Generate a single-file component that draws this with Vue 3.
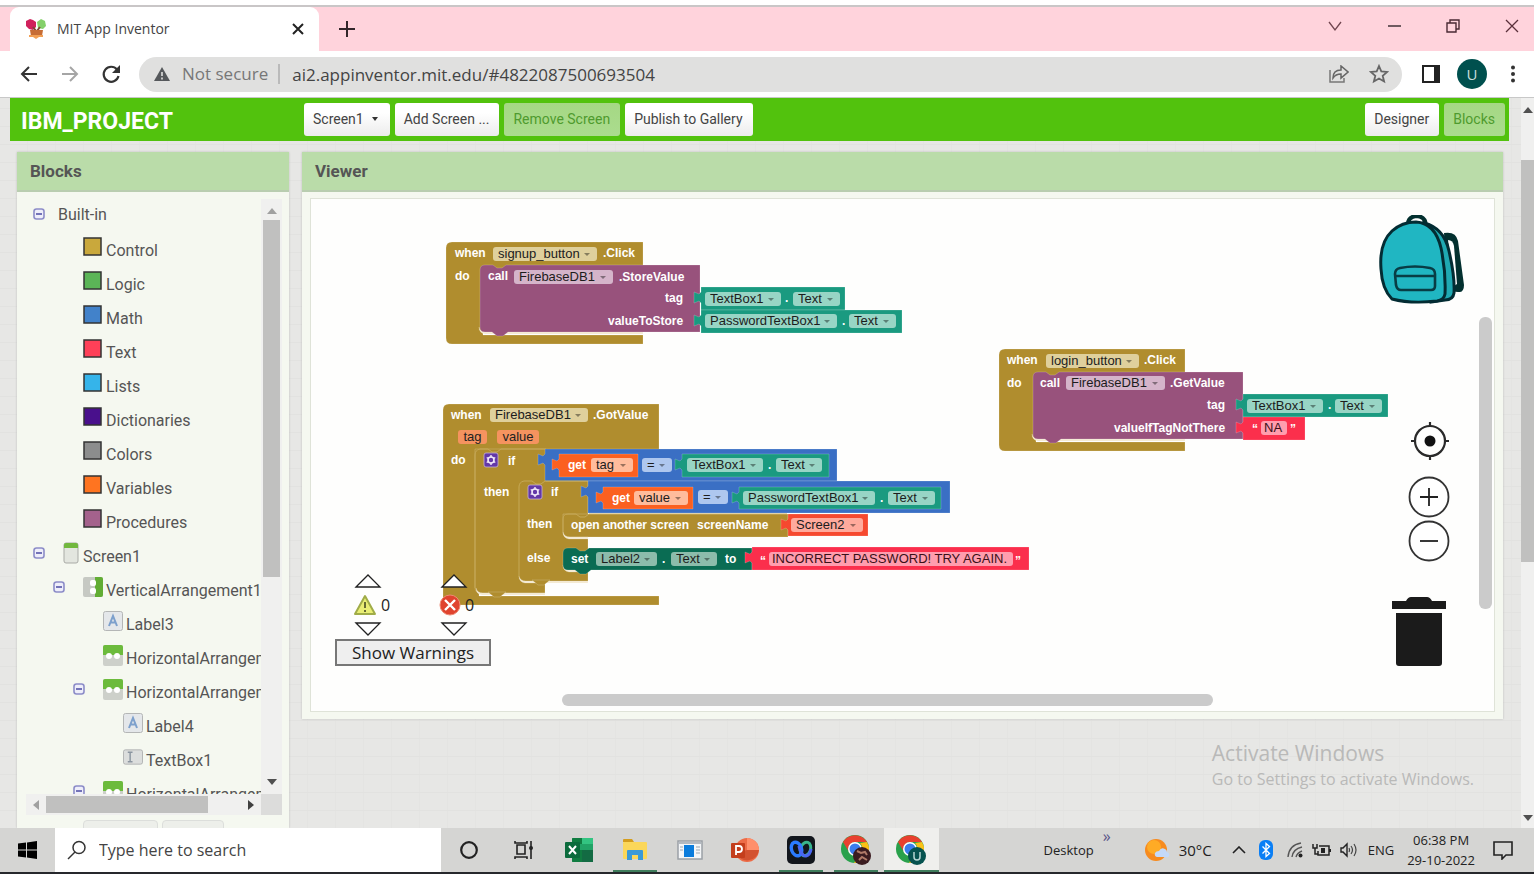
<script setup>
import { ref } from 'vue'

const address = ref('ai2.appinventor.mit.edu/#4822087500693504')
const query = ref('')

const screenButtons = [
  { text: 'Screen1', caret: true },
  { text: 'Add Screen ...' },
  { text: 'Remove Screen', off: true },
  { text: 'Publish to Gallery' },
]

const tree = [
  { level: 0, toggle: true, text: 'Built-in', root: true },
  { level: 1, color: '#c9a83c', text: 'Control' },
  { level: 1, color: '#5bb557', text: 'Logic' },
  { level: 1, color: '#4282ca', text: 'Math' },
  { level: 1, color: '#ff4058', text: 'Text' },
  { level: 1, color: '#35b4ea', text: 'Lists' },
  { level: 1, color: '#49108c', text: 'Dictionaries' },
  { level: 1, color: '#8c8d8d', text: 'Colors' },
  { level: 1, color: '#ff7420', text: 'Variables' },
  { level: 1, color: '#a4628c', text: 'Procedures' },
  { level: 0, toggle: true, icon: 'screen', text: 'Screen1' },
  { level: 1, toggle: true, icon: 'vertical', text: 'VerticalArrangement1' },
  { level: 2, icon: 'label', text: 'Label3' },
  { level: 2, icon: 'horizontal', text: 'HorizontalArrangement1' },
  { level: 2, toggle: true, icon: 'horizontal', text: 'HorizontalArrangement2' },
  { level: 3, icon: 'label', text: 'Label4' },
  { level: 3, icon: 'textbox', text: 'TextBox1' },
  { level: 2, toggle: true, icon: 'horizontal', text: 'HorizontalArrangement3' },
]

// Block outlines use workspace coordinates; the view is scrolled by this offset.
const view = { x: 311, y: 199 }

const GOLD = '#b08d2e'
const PURPLE = '#98527c'
const TEAL = '#1a9a80'
const BLUE = '#3a6fc4'
const ORANGE = '#fb6020'
const RED = '#fb2f4c'
const GREEN = '#0a6c53'

function valueBlock(x, y, w, h, fill) {
  return { fill, d: `M${x} ${y}h${w}v${h}h${-w}V${y + 16}l-2 -2l-5 2v-11l5 2l2 -2z` }
}
function stackBlock(x, y, w, h, fill) {
  return {
    fill,
    d: `M${x + 5} ${y}h8l4 3h5l4 -3H${x + w}v${h}H${x + 28}l-5 4h-6l-5 -4H${x + 5}q-5 0 -5 -5V${y + 5}q0 -5 5 -5z`,
  }
}
function eventBlock(x, y, right, innerX, innerTop, armTop, bottom) {
  return {
    fill: GOLD,
    d: `M${x + 6} ${y}H${right}V${innerTop + 4}H${innerX + 4}V${armTop}H${right}V${bottom}H${x + 6}q-6 0 -6 -6V${y + 6}q0 -6 6 -6z`,
  }
}
function seam(x, y, right) {
  return { fill: '#f3e8cf', d: `M${x} ${y - 6}q1 5 7 5H${right}v2H${x + 6}q-6 -1 -6 -7z` }
}

const shapes = [
  eventBlock(446, 242, 643, 479, 265, 335, 344),
  seam(479, 333, 643),
  stackBlock(480, 265, 220, 67, PURPLE),
  valueBlock(701, 287, 144, 23, TEAL),
  valueBlock(701, 310, 201, 23, TEAL),

  eventBlock(999, 349, 1185, 1032, 372, 442, 451),
  seam(1032, 440, 1185),
  stackBlock(1033, 372, 210, 67, PURPLE),
  valueBlock(1243, 394, 145, 23, TEAL),
  valueBlock(1243, 417, 62, 23, RED),

  eventBlock(443, 404, 659, 475, 449, 596, 605),
  { fill: GOLD, d: 'M475 449H546V481H588V583H545V593H480q-5 0 -5 -6z' },
  seam(476, 594, 545),
  { fill: GOLD, d: 'M488 592h18l-6 5h-6z' },
  seam(519, 582, 588),
  { fill: GOLD, d: 'M532 580h18l-6 5h-6z' },
  valueBlock(545, 449, 292, 32, BLUE),
  valueBlock(559, 454, 79, 23, ORANGE),
  valueBlock(682, 454, 147, 23, TEAL),
  valueBlock(588, 481, 362, 32, BLUE),
  valueBlock(603, 487, 90, 22, ORANGE),
  valueBlock(739, 487, 202, 22, TEAL),
  { fill: GOLD, d: 'M563 514H788V537H568q-5 0 -5 -5z' },
  seam(563, 538, 588),
  valueBlock(788, 514, 80, 22, '#f6492f'),
  seam(563, 571, 588),
  stackBlock(563, 548, 189, 22, GREEN),
  valueBlock(752, 547, 277, 23, RED),
]

const edges = [
  'M475 588V455q0 -5 5 -6h8l4 3h5l4 -3H545',
  'M519 577V487q0 -5 5 -6h8l4 3h5l4 -3H588',
  'M563 532V519q0 -5 5 -5h8l4 3h5l4 -3H787',
]

const labels = [
  [455, 253, 'when'], [603, 253, '.Click'], [455, 276, 'do'], [488, 276, 'call'],
  [619, 277, '.StoreValue'], [665, 298, 'tag'], [608, 321, 'valueToStore'],
  [785, 298, '.'], [842, 321, '.'],
  [1007, 360, 'when'], [1144, 360, '.Click'], [1007, 383, 'do'], [1040, 383, 'call'],
  [1170, 383, '.GetValue'], [1207, 405, 'tag'], [1114, 428, 'valueIfTagNotThere'],
  [1328, 405, '.'], [1252, 429, '“'], [1290, 429, '”'],
  [451, 415, 'when'], [593, 415, '.GotValue'], [451, 460, 'do'], [508, 461, 'if'],
  [568, 465, 'get'], [768, 465, '.'], [484, 492, 'then'], [551, 492, 'if'],
  [612, 498, 'get'], [880, 498, '.'], [527, 524, 'then'],
  [571, 525, 'open another screen'], [697, 525, 'screenName'],
  [527, 558, 'else'], [571, 559, 'set'], [662, 559, '.'], [725, 559, 'to'],
  [760, 561, '“'], [1015, 561, '”'],
].map(([x, y, text]) => ({ x, y, text }))

const fields = [
  [493, 254, 104, 'gold', 'signup_button'],
  [514, 277, 99, 'purple', 'FirebaseDB1'],
  [705, 299, 76, 'teal', 'TextBox1'],
  [793, 299, 47, 'teal', 'Text'],
  [705, 321, 132, 'teal', 'PasswordTextBox1'],
  [849, 321, 47, 'teal', 'Text'],
  [1046, 361, 93, 'gold', 'login_button'],
  [1066, 383, 99, 'purple', 'FirebaseDB1'],
  [1247, 406, 76, 'teal', 'TextBox1'],
  [1335, 406, 47, 'teal', 'Text'],
  [490, 415, 98, 'gold', 'FirebaseDB1'],
  [591, 465, 42, 'orange', 'tag'],
  [642, 465, 30, 'blue', '='],
  [687, 465, 76, 'teal', 'TextBox1'],
  [776, 465, 46, 'teal', 'Text'],
  [634, 498, 54, 'orange', 'value'],
  [698, 497, 30, 'blue', '='],
  [743, 498, 132, 'teal', 'PasswordTextBox1'],
  [888, 498, 47, 'teal', 'Text'],
  [791, 525, 72, 'coral', 'Screen2'],
  [596, 559, 61, 'green', 'Label2'],
  [671, 559, 46, 'green', 'Text'],
].map(([x, y, w, tone, text]) => ({ x, y, w, tone, text }))

const inputs = [
  { x: 1261, y: 428, w: 26, text: 'NA', name: 'Value if tag not there' },
  { x: 769, y: 559, w: 244, text: 'INCORRECT PASSWORD! TRY AGAIN.', name: 'Label text' },
]
const chips = [
  { x: 458, y: 437, w: 29, text: 'tag' },
  { x: 497, y: 437, w: 42, text: 'value' },
]

function place(item) {
  return {
    left: item.x - view.x + 'px',
    top: item.y - 7 - view.y + 'px',
    width: item.w ? item.w + 'px' : 'auto',
  }
}

const apps = ['Cortana', 'Task View', 'Excel', 'File Explorer', 'Mail', 'PowerPoint', 'Webex', 'Chrome', 'Chrome profile U']
const running = ['File Explorer', 'Webex', 'Chrome', 'Chrome profile U']
</script>

<template>
  <div class="desktop">
    <header class="tabstrip">
      <div class="tab">
        <svg width="22" height="22" viewBox="0 0 22 22" aria-hidden="true">
          <path d="M1 3l4-2 3 1 3 2v5l-3 3-4-1-3-3z" fill="#d0215c" />
          <path d="M12 4l4-3 4 2 1 5-3 3-5-1z" fill="#84d06a" />
          <path d="M8 9l3 4M15 9l-3 4" stroke="#7c4a35" stroke-width="2" />
          <path d="M5 12h13l-1 6H6z" fill="#c76d35" />
          <path d="M4 17h14v2h-4l-3 2-3-2H4z" fill="#f2a054" />
        </svg>
        <span class="tab-title">MIT App Inventor</span>
        <button class="plain" aria-label="Close tab">
          <svg width="12" height="12" viewBox="0 0 12 12"><path d="M1 1l10 10M11 1L1 11" stroke="#222" stroke-width="2" /></svg>
        </button>
      </div>
      <button class="plain newtab" aria-label="New tab">
        <svg width="16" height="16" viewBox="0 0 16 16"><path d="M8 0v16M0 8h16" stroke="#33262a" stroke-width="2" /></svg>
      </button>
      <div class="window-controls">
        <button class="plain" aria-label="Search tabs">
          <svg width="14" height="14" viewBox="0 0 14 14"><path d="M1 3l6 8 6-8" fill="none" stroke="#70454f" stroke-width="1.3" /></svg>
        </button>
        <button class="plain" aria-label="Minimize">
          <svg width="14" height="14" viewBox="0 0 14 14"><path d="M1 7h13" stroke="#33262a" stroke-width="1.4" /></svg>
        </button>
        <button class="plain" aria-label="Restore">
          <svg width="14" height="14" viewBox="0 0 14 14"><path d="M1 4h9v9H1zM4 4V1h9v9h-3" fill="none" stroke="#4a2a33" stroke-width="1.4" /></svg>
        </button>
        <button class="plain" aria-label="Close window">
          <svg width="14" height="14" viewBox="0 0 14 14"><path d="M1 1l12 12M13 1L1 13" stroke="#5a303a" stroke-width="1.3" /></svg>
        </button>
      </div>
    </header>

    <nav class="toolbar">
      <button class="plain nav" aria-label="Back">
        <svg width="18" height="18" viewBox="0 0 18 18"><path d="M17 9H2M9 2L2 9l7 7" fill="none" stroke="#333" stroke-width="2" /></svg>
      </button>
      <button class="plain nav" aria-label="Forward">
        <svg width="18" height="18" viewBox="0 0 18 18"><path d="M1 9h15M9 2l7 7-7 7" fill="none" stroke="#a5a5a5" stroke-width="2" /></svg>
      </button>
      <button class="plain nav" aria-label="Reload">
        <svg width="20" height="20" viewBox="0 0 20 20"><path d="M16 5.500A7.500 7.500 0 1 0 17.500 12" fill="none" stroke="#333" stroke-width="2.200" /><path d="M19 1v8h-8z" fill="#333" /></svg>
      </button>
      <div class="omnibox">
        <svg width="16" height="14" viewBox="0 0 16 14" aria-hidden="true"><path d="M8 0l8 14H0z" fill="#55585b" /><path d="M8 5v4M8 10.500v2" stroke="#e0e0df" stroke-width="1.600" /></svg>
        <span class="secure">Not secure</span>
        <input v-model="address" aria-label="Address" />
        <button class="plain" aria-label="Share">
          <svg width="20" height="18" viewBox="0 0 20 18"><path d="M1 5v12h14v-4" fill="none" stroke="#777" stroke-width="1.500" /><path d="M4 13c0-5 3-8 8-8V1l7 6-7 6V9c-4 0-6 1-8 4z" fill="none" stroke="#666" stroke-width="1.500" /></svg>
        </button>
        <button class="plain" aria-label="Bookmark">
          <svg width="20" height="20" viewBox="0 0 20 20"><path d="M10 2l2.300 5.400 5.900.5-4.500 3.900 1.400 5.700L10 14.500l-5.100 3 1.400-5.700L1.800 7.900l5.900-.5z" fill="none" stroke="#666" stroke-width="1.800" /></svg>
        </button>
      </div>
      <button class="plain" aria-label="Side panel">
        <svg width="18" height="18" viewBox="0 0 18 18"><path d="M1 1h16v16H1z" fill="none" stroke="#222" stroke-width="2" /><path d="M12 1h6v16h-6z" fill="#222" /></svg>
      </button>
      <button class="avatar">U</button>
      <button class="plain" aria-label="Menu">
        <svg width="6" height="18" viewBox="0 0 6 18"><circle cx="3" cy="2.500" r="2" fill="#333" /><circle cx="3" cy="9" r="2" fill="#333" /><circle cx="3" cy="15.500" r="2" fill="#333" /></svg>
      </button>
    </nav>

    <div class="page">
      <div class="content">
        <header class="topbar">
          <h1>IBM_PROJECT</h1>
          <button v-for="b in screenButtons" :key="b.text" class="push" :class="{ off: b.off }" :disabled="b.off">
            {{ b.text }}<i v-if="b.caret" class="caret"></i>
          </button>
          <span class="spacer"></span>
          <button class="push">Designer</button>
          <button class="push off" disabled>Blocks</button>
        </header>

        <main class="panels">
          <section class="panel side">
            <h2>Blocks</h2>
            <div class="tree-box">
              <ul class="tree">
                <li v-for="(row, i) in tree" :key="i" :class="['row', { root: row.root }]" :style="{ paddingLeft: 7 + row.level * 20 + 'px' }">
                  <button v-if="row.toggle" class="plain toggle" :aria-label="'Collapse ' + row.text">
                    <svg width="12" height="12" viewBox="0 0 12 12"><rect x="1" y="1" width="10" height="10" rx="2.500" fill="#eeeefa" stroke="#8c8cc8" stroke-width="1.600" /><path d="M3 6h6" stroke="#5454a8" stroke-width="1.600" /></svg>
                  </button>
                  <span v-else class="toggle"></span>
                  <svg v-if="row.color" class="icon" width="20" height="20" viewBox="0 0 20 20"><rect x="1" y="1" width="17" height="17" :fill="row.color" stroke="#333" stroke-width="1.500" /></svg>
                  <svg v-else-if="row.icon === 'screen'" class="icon" width="17" height="22" viewBox="0 0 17 22"><rect x="1" y="1" width="14" height="20" rx="2" fill="#e3e6df" stroke="#a9aba6" /><path d="M1 6V3q0-2 2-2h10q2 0 2 2v3z" fill="#72b83e" /></svg>
                  <svg v-else-if="row.icon === 'vertical'" class="icon" width="20" height="20" viewBox="0 0 20 20"><rect width="20" height="20" rx="2" fill="#c6c9c3" /><path d="M12 0h6q2 0 2 2v16q0 2-2 2h-6z" fill="#62ad34" /><rect x="7" y="3" width="6" height="6" rx="2" fill="#fff" /><rect x="7" y="11" width="6" height="6" rx="2" fill="#fff" /></svg>
                  <svg v-else-if="row.icon === 'horizontal'" class="icon" width="20" height="21" viewBox="0 0 20 21"><rect width="20" height="21" rx="2" fill="#cdd0ca" /><path d="M0 10V2q0-2 2-2h16q2 0 2 2v8z" fill="#6cbb3c" /><circle cx="6" cy="11" r="3" fill="#fff" /><circle cx="14" cy="11" r="3" fill="#fff" /></svg>
                  <svg v-else-if="row.icon === 'label'" class="icon" width="20" height="20" viewBox="0 0 20 20"><rect x=".5" y=".5" width="19" height="19" rx="2" fill="#e4e7ea" stroke="#b4b6b6" /><path d="M6 15l4-10 4 10M7.500 11.500h5" fill="none" stroke="#7da0cc" stroke-width="2" /></svg>
                  <svg v-else-if="row.icon === 'textbox'" class="icon" width="20" height="16" viewBox="0 0 21 16"><rect x=".5" y=".5" width="20" height="15" rx="2" fill="#dcdedd" stroke="#b0b2b2" /><path d="M5 3h5M5 13h5M7.500 3v10" stroke="#8b95a0" stroke-width="1.500" /></svg>
                  <span class="name">{{ row.text }}</span>
                </li>
              </ul>
              <div class="vbar"><i class="up"></i><i class="thumb"></i><i class="down"></i></div>
              <div class="hbar"><i class="left"></i><i class="thumb"></i><i class="right"></i></div>
              <div class="corner"></div>
            </div>
            <div class="actions">
              <button class="ghost rename" aria-label="Rename" disabled></button>
              <button class="ghost delete" aria-label="Delete" disabled></button>
            </div>
          </section>

          <section class="panel viewer">
            <h2>Viewer</h2>
            <div class="canvas">
              <svg class="shapes" aria-hidden="true">
                <g :transform="`translate(${-view.x} ${-view.y})`">
                  <path v-for="(s, i) in shapes" :key="i" :d="s.d" :fill="s.fill" stroke="#fff" stroke-opacity=".18" />
                  <path v-for="e in edges" :key="e" :d="e" fill="none" stroke="#c5a856" />
                  <g v-for="p in [[484, 453], [528, 485]]" :key="p[0]" :transform="`translate(${p[0]} ${p[1]})`">
                    <rect width="14" height="14" rx="2" fill="#6338a8" stroke="#c5b1d8" stroke-width=".8" />
                    <circle cx="7" cy="7" r="3" fill="none" stroke="#f2eafa" stroke-width="1.600" />
                    <path d="M7 2v2M7 10v2M2.700 4.500l1.700 1M9.600 8.500l1.700 1M2.700 9.500l1.700-1M9.600 5.500l1.700-1" stroke="#f2eafa" stroke-width="1.400" />
                  </g>
                </g>
              </svg>
              <span v-for="(l, i) in labels" :key="'l' + i" class="label" :style="place(l)">{{ l.text }}</span>
              <span v-for="c in chips" :key="c.text" class="chip" :style="place(c)">{{ c.text }}</span>
              <span v-for="(f, i) in fields" :key="'f' + i" class="field" :class="f.tone" :style="place(f)">
                <select :aria-label="f.text"><option>{{ f.text }}</option></select>
              </span>
              <input v-for="n in inputs" :key="n.text" class="field-input" :style="place(n)" :value="n.text" :aria-label="n.name" />

              <div class="warnings">
                <div class="counters">
                  <div class="counter">
                    <button class="plain" aria-label="Previous warning"><svg width="28" height="14" viewBox="0 0 28 14"><path d="M2 13L14 1l12 12z" fill="#fff" stroke="#222" stroke-width="1.300" /></svg></button>
                    <span class="count">
                      <svg width="24" height="22" viewBox="0 0 24 22"><path d="M12 2l10 18H2z" fill="#e9ee74" stroke="#a0ac48" stroke-width="2" stroke-linejoin="round" /><path d="M12 8v6M12 16v2" stroke="#666b32" stroke-width="2" /></svg>0
                    </span>
                    <button class="plain" aria-label="Next warning"><svg width="28" height="14" viewBox="0 0 28 14"><path d="M2 1l12 12L26 1z" fill="#fff" stroke="#222" stroke-width="1.300" /></svg></button>
                  </div>
                  <div class="counter">
                    <button class="plain" aria-label="Previous error"><svg width="28" height="14" viewBox="0 0 28 14"><path d="M2 13L14 1l12 12z" fill="#fff" stroke="#222" stroke-width="1.300" /></svg></button>
                    <span class="count">
                      <svg width="22" height="22" viewBox="0 0 22 22"><circle cx="11" cy="11" r="10" fill="#e0442f" stroke="#ee8a74" /><path d="M6 6l10 10M16 6L6 16" stroke="#fff" stroke-width="2.400" /></svg>0
                    </span>
                    <button class="plain" aria-label="Next error"><svg width="28" height="14" viewBox="0 0 28 14"><path d="M2 1l12 12L26 1z" fill="#fff" stroke="#222" stroke-width="1.300" /></svg></button>
                  </div>
                </div>
                <button class="show">Show Warnings</button>
              </div>

              <button class="plain pack" aria-label="Backpack">
                <svg width="88" height="90" viewBox="0 0 88 90">
                  <path d="M66 18q12-2 14 8l6 44q0 8-6 7l-10-1z" fill="#03302f" />
                  <path d="M70 25q5 0 6 6l3 38-3 2z" fill="#fff" />
                  <path d="M30 9q0-7 8-8 9 0 10 9" fill="none" stroke="#03302f" stroke-width="4" />
                  <path d="M46 8q20 5 25 28 6 26 5 42-1 7-9 7l-14 2z" fill="#1fa9b2" stroke="#032c33" stroke-width="3" />
                  <path d="M14 84Q4 74 3 54 1 28 14 16 24 7 38 7q19 1 25 26 5 24 4 46-1 6-8 7-26 3-45-2z" fill="#20b6c2" stroke="#032c33" stroke-width="3" />
                  <path d="M17 59q0-5 5-6 15-3 30 0 5 1 5 6v12q0 4-4 4H23q-4 0-5-5zM17 61h40" fill="none" stroke="#083d45" stroke-width="2.600" />
                </svg>
              </button>
              <div class="zoom">
                <button class="plain" aria-label="Center"><svg width="42" height="42" viewBox="0 0 42 42"><circle cx="22" cy="21" r="15" fill="none" stroke="#2a2a2a" stroke-width="2.200" /><circle cx="22" cy="21" r="5.500" fill="#111" /><path d="M22 2v5M22 35v5M3 21h5M36 21h5" stroke="#2a2a2a" stroke-width="2.200" /></svg></button>
                <button class="plain" aria-label="Zoom in"><svg width="42" height="42" viewBox="0 0 42 42"><circle cx="21" cy="21" r="19.500" fill="#fff" stroke="#333" stroke-width="1.800" /><path d="M12 21h18M21 12v18" stroke="#222" stroke-width="1.800" /></svg></button>
                <button class="plain" aria-label="Zoom out"><svg width="42" height="42" viewBox="0 0 42 42"><circle cx="21" cy="21" r="19.500" fill="#fff" stroke="#333" stroke-width="1.800" /><path d="M12 21h18" stroke="#222" stroke-width="1.800" /></svg></button>
              </div>
              <button class="plain trash" aria-label="Trash">
                <svg width="54" height="70" viewBox="0 0 54 70"><path d="M0 4h14q2-4 5-4h16q3 0 5 4h14v8H0zM4 16h46v50q0 3-3 3H7q-3 0-3-3z" fill="#1b1b1b" /></svg>
              </button>
              <i class="ws-vbar"></i>
              <i class="ws-hbar"></i>
            </div>
          </section>
        </main>

        <div class="activate">
          <p class="big">Activate Windows</p>
          <p>Go to Settings to activate Windows.</p>
        </div>
      </div>
      <div class="page-bar"><i class="up"></i><i class="thumb"></i><i class="down"></i></div>
    </div>

    <footer class="taskbar">
      <button class="plain start" aria-label="Start">
        <svg width="19" height="18" viewBox="0 0 19 18"><path d="M0 2.500l8-1v7H0zM9 1.400L19 0v8.500H9zM0 9.500h8v7l-8-1zM9 9.500h10V18L9 16.600z" fill="#000" /></svg>
      </button>
      <label class="search">
        <svg width="20" height="20" viewBox="0 0 20 20" aria-hidden="true"><circle cx="12" cy="7.500" r="6" fill="none" stroke="#333" stroke-width="1.500" /><path d="M8 12l-7 7" stroke="#333" stroke-width="1.500" /></svg>
        <input v-model="query" placeholder="Type here to search" aria-label="Search" />
      </label>
      <div class="apps">
        <button v-for="a in apps" :key="a" class="plain app" :class="{ running: running.includes(a), active: a === 'Chrome profile U' }" :aria-label="a">
          <svg v-if="a === 'Cortana'" width="20" height="20" viewBox="0 0 20 20"><circle cx="10" cy="10" r="7.800" fill="none" stroke="#222" stroke-width="2.200" /></svg>
          <svg v-else-if="a === 'Task View'" width="20" height="20" viewBox="0 0 20 20"><path d="M1 1v2h12V1M1 19v-2h12v2M3 5h8v9H3zM17 1v18" fill="none" stroke="#222" stroke-width="1.600" /><circle cx="17" cy="8" r="2" fill="#222" /></svg>
          <svg v-else-if="a === 'Excel'" width="28" height="26" viewBox="0 0 28 26"><rect x="7" y="1" width="21" height="24" rx="1" fill="#21a366" /><path d="M7 7h10V1H8q-1 0-1 1zM7 13h10v12H8q-1 0-1-1z" fill="#107c41" /><path d="M17 1h11v6H17z" fill="#33c481" /><path d="M17 13h11v12H17z" fill="#136b43" /><rect y="5" width="15" height="16" rx="1" fill="#0b6b3c" /><path d="M4 9l7 8M11 9l-7 8" stroke="#fff" stroke-width="2" /></svg>
          <svg v-else-if="a === 'File Explorer'" width="26" height="24" viewBox="0 0 26 24"><path d="M1 2q0-1 1-1h8l2 3H1z" fill="#d59e1e" /><rect x="1" y="4" width="24" height="17" rx="1" fill="#fbd75a" /><path d="M5 22v-9q0-1 1-1h14q1 0 1 1v9h-5v-5h-6v5z" fill="#3a9ad8" /></svg>
          <svg v-else-if="a === 'Mail'" width="26" height="20" viewBox="0 0 26 20"><rect x="1" y="1" width="24" height="18" fill="#f4f6f8" stroke="#9ba0a6" stroke-width="1.500" /><path d="M2 3h22" stroke="#b4bac1" stroke-width="2" /><rect x="7" y="5" width="10" height="12" fill="#0b7cdc" /><path d="M19 7h4M19 10h4M19 13h4M3 7h3M3 10h3" stroke="#9ca7b2" /></svg>
          <svg v-else-if="a === 'PowerPoint'" width="28" height="26" viewBox="0 0 28 26"><circle cx="16" cy="13" r="12" fill="#ed6c47" /><path d="M16 1a12 12 0 0 1 12 12H16z" fill="#ff8f6b" /><path d="M5 16a12 12 0 0 0 23-3H16z" fill="#d35230" /><rect y="6" width="14" height="15" rx="1" fill="#c43e1c" /><path d="M5 18V9h3q3 0 3 3t-3 3H5" fill="none" stroke="#fff" stroke-width="1.800" /></svg>
          <svg v-else-if="a === 'Webex'" width="28" height="28" viewBox="0 0 28 28">
            <rect width="28" height="28" rx="5" fill="#12161c" />
            <ellipse cx="18.500" cy="13" rx="5" ry="7" transform="rotate(20 18.500 13)" fill="none" stroke="#38b48c" stroke-width="3" />
            <ellipse cx="9.500" cy="13" rx="5" ry="7" transform="rotate(-20 9.500 13)" fill="none" stroke="#2b7bff" stroke-width="3.400" />
            <path d="M12 10q2 10 7 10 4-1 5-7" fill="none" stroke="#4a66f0" stroke-width="3.200" />
          </svg>
          <svg v-else width="32" height="32" viewBox="0 0 32 32">
            <circle cx="15" cy="15" r="14" fill="#2aa14c" />
            <path d="M3 8a14 14 0 0 1 24 0H15a7 7 0 0 0-6 10z" fill="#e9402f" />
            <path d="M27 8a14 14 0 0 1-13 21l7-11a7 7 0 0 0-1-9z" fill="#fbc116" />
            <circle cx="15" cy="15" r="7" fill="#fff" /><circle cx="15" cy="15" r="5.500" fill="#3b7ded" />
            <circle cx="22" cy="22" r="9" :fill="a === 'Chrome' ? '#3b1c20' : '#06524f'" />
            <path v-if="a === 'Chrome'" d="M17 17l4 2 4-1 2 3M19 26l3-3 5 3" fill="none" stroke="#b07a68" stroke-width="2" />
            <path v-else d="M19 18v5q0 3 3 3t3-3v-5" fill="none" stroke="#b6d5d2" stroke-width="1.500" />
          </svg>
        </button>
      </div>
      <div class="tray">
        <span class="desk">Desktop</span>
        <span class="more">»</span>
        <svg class="weather" width="26" height="24" viewBox="0 0 26 24"><circle cx="12" cy="12" r="11" fill="#f78b1e" /><circle cx="10" cy="9" r="7" fill="#ffab25" /><path d="M13 19q-3-1-2-4 1-2 4-2 2-4 6-2 2 1 2 3 3 1 2 4-1 2-3 1z" fill="#c4d9f8" /></svg>
        <span class="temp">30°C</span>
        <svg width="14" height="8" viewBox="0 0 14 8"><path d="M1 7l6-6 6 6" fill="none" stroke="#222" stroke-width="1.600" /></svg>
        <svg class="bluetooth" width="14" height="20" viewBox="0 0 14 20"><rect width="14" height="20" rx="6" fill="#0a7ff5" /><path d="M3.500 6.500l7 7L7 16.500v-13l3.500 3-7 7" fill="none" stroke="#fff" stroke-width="1.300" /></svg>
        <svg width="16" height="16" viewBox="0 0 16 16"><path d="M1 15Q2 3 14 1M5 15q1-8 10-10M9 15q1-4 6-6" fill="none" stroke="#555" stroke-width="1.400" /><circle cx="13.500" cy="13.500" r="2" fill="#222" /></svg>
        <svg width="19" height="14" viewBox="0 0 19 14"><path d="M7 3h10v9H6V8" fill="none" stroke="#222" stroke-width="1.500" /><path d="M17 6h2v3h-2zM9 5h4v5H9z" fill="#222" /><path d="M1 1v4h4V1M3 5v6h3" fill="none" stroke="#222" stroke-width="1.500" /></svg>
        <svg width="18" height="16" viewBox="0 0 18 16"><path d="M1 6v4h2l4 4V2L3 6z" fill="none" stroke="#222" stroke-width="1.400" /><path d="M9 6q1 2 0 4M11 4q3 4 0 8M14 2q4 6 0 12" fill="none" stroke="#444" stroke-width="1.200" /></svg>
        <span class="lang">ENG</span>
        <span class="clock"><span>06:38 PM</span><span>29-10-2022</span></span>
        <svg width="20" height="19" viewBox="0 0 20 19"><path d="M1 1h18v13h-6l-4 4v-4H1z" fill="none" stroke="#222" stroke-width="1.600" /></svg>
      </div>
    </footer>
  </div>
</template>

<style>
body {
  margin: 0;
  overflow: hidden;
}
</style>

<style scoped>
* {
  box-sizing: border-box;
}
.desktop {
  display: flex;
  flex-direction: column;
  height: 100vh;
  background: #fff;
  color: #222;
  font-family: "Open Sans", "Noto Sans", sans-serif;
}
button,
input,
select {
  margin: 0;
  padding: 0;
  border: 0;
  font: inherit;
  color: inherit;
}
.plain {
  display: flex;
  align-items: center;
  justify-content: center;
  background: none;
}
svg {
  display: block;
  flex: none;
}

/* browser chrome */
.tabstrip {
  display: flex;
  align-items: center;
  flex: none;
  height: 46px;
  margin-top: 5px;
  border-top: 2px solid #c9c6c7;
  background: #ffd3dc;
}
.tab {
  display: flex;
  align-items: center;
  gap: 10px;
  width: 309px;
  height: 44px;
  margin-left: 10px;
  padding: 0 15px;
  border-radius: 9px 9px 0 0;
  background: #fff;
  font-size: 14px;
  color: #444;
}
.tab-title {
  flex: 1;
  line-height: 20px;
}
.newtab {
  margin-left: 20px;
}
.window-controls {
  display: flex;
  gap: 45px;
  margin-left: auto;
  padding: 0 15px 6px 0;
}
.toolbar {
  display: flex;
  align-items: center;
  flex: none;
  gap: 20px;
  height: 47px;
  padding: 0 18px;
  border-bottom: 1px solid #c8c8c8;
  background: #fff;
}
.nav {
  width: 21px;
}
.omnibox {
  display: flex;
  align-items: center;
  flex: 1;
  height: 35px;
  margin-left: -2px;
  padding: 0 9px 0 15px;
  gap: 12px;
  border-radius: 18px;
  background: #e0e0df;
  font-size: 17px;
}
.omnibox .secure {
  padding-right: 10px;
  border-right: 2px solid #bababa;
  line-height: 20px;
  color: #777;
}
.omnibox input {
  flex: 1;
  min-width: 0;
  background: none;
  color: #444;
}
.omnibox .plain {
  width: 28px;
}
.avatar {
  width: 30px;
  height: 30px;
  margin: 0 3px 0 -3px;
  border-radius: 50%;
  background: #00504e;
  color: #c8dedc;
  font-size: 15px;
}

/* page */
.page {
  display: flex;
  flex: 1;
  min-height: 0;
  overflow: hidden;
}
.content {
  position: relative;
  display: flex;
  flex-direction: column;
  flex: 1;
  min-width: 0;
  background:
    repeating-linear-gradient(0deg, #0000 0 17px, #e2e2e0 17px 18px),
    repeating-linear-gradient(90deg, #0000 0 27px, #e4e4e2 27px 28px),
    #e7e7e5;
  font-family: Roboto, sans-serif;
}
.topbar {
  display: flex;
  align-items: center;
  flex: none;
  gap: 5px;
  height: 43px;
  margin: 0 12px 0 10px;
  padding: 0 4px 0 11px;
  background: #52c20d;
}
h1 {
  width: 278px;
  margin: 0;
  font-size: 23px;
  font-weight: 700;
  line-height: 26px;
  padding-top: 4px;
  color: #fff;
}
.push {
  height: 33px;
  padding: 0 10px 2px 9px;
  border-radius: 3px;
  background: linear-gradient(#fff 30%, #ececec);
  font-size: 14px;
  color: #444;
  white-space: nowrap;
}
.push.off {
  background: linear-gradient(#a5d884, #abdc8e);
  color: #4f9b2e;
}
.caret {
  display: inline-block;
  margin: 0 2px 3px 8px;
  border: 3px solid transparent;
  border-top: 4px solid #333;
  border-bottom: 0;
}
.spacer {
  flex: 1;
}
.panels {
  display: flex;
  flex: 1;
  gap: 13px;
  min-height: 0;
  padding: 11px 18px 0 17px;
}
.panel {
  display: flex;
  flex-direction: column;
  background: #f5f8f0;
  box-shadow: 0 0 2px #bbb;
}
h2 {
  flex: none;
  margin: 0;
  padding: 0 13px;
  border-bottom: 2px solid #b9cdb0;
  background: #badca9;
  font-size: 17px;
  font-weight: 700;
  line-height: 38px;
  color: #555;
}
.side {
  flex: none;
  width: 272px;
}
.tree-box {
  display: grid;
  grid-template-columns: 1fr 21px;
  grid-template-rows: 1fr 21px;
  flex: 1;
  min-height: 0;
  margin: 7px 7px 0 9px;
}
.tree {
  min-width: 0;
  min-height: 0;
  margin: 0;
  padding: 0;
  overflow: hidden;
  list-style: none;
}
.row {
  display: flex;
  align-items: center;
  height: 34px;
  font-size: 16px;
  line-height: 20px;
  color: #555;
  white-space: nowrap;
}
.root {
  height: 32px;
  margin-bottom: 3px;
}
.toggle {
  flex: none;
  width: 12px;
  margin: 0 18px 8px 0;
}
.root .toggle {
  margin: 0 13px 3px 0;
}
.icon {
  margin: 0 3px 8px 0;
}
.vbar,
.page-bar {
  display: flex;
  flex-direction: column;
  align-items: center;
  background: #f0f0ef;
}
.up,
.down,
.left,
.right {
  flex: none;
  border: 5px solid transparent;
}
.up {
  border-top: 0;
  border-bottom: 6px solid #a0a0a0;
}
.down {
  border-bottom: 0;
  border-top: 6px solid #505050;
}
.left {
  border-left: 0;
  border-right: 6px solid #a0a0a0;
}
.right {
  border-right: 0;
  border-left: 6px solid #404040;
}
.thumb {
  background: #c0c0bf;
}
.vbar .up {
  margin: 9px 0 6px;
}
.vbar .thumb {
  width: 17px;
  height: 60%;
}
.vbar .down {
  margin: auto 0 9px;
}
.hbar {
  display: flex;
  align-items: center;
  background: #f0f0ef;
}
.hbar .left {
  margin: 0 7px;
}
.hbar .thumb {
  width: 69%;
  height: 17px;
}
.hbar .right {
  margin: 0 7px 0 auto;
}
.corner {
  background: #dcdcdb;
}
.actions {
  display: flex;
  flex: none;
  justify-content: center;
  gap: 4px;
  height: 13px;
  padding: 5px 0 0;
  overflow: hidden;
}
.ghost {
  height: 30px;
  border: 1px solid #dcdedb;
  border-radius: 4px;
  background: #edefea;
}
.rename {
  width: 75px;
}
.delete {
  width: 62px;
}
.viewer {
  flex: 1;
  min-width: 0;
  margin-bottom: 109px;
}

/* block workspace */
.canvas {
  position: relative;
  flex: 1;
  min-height: 0;
  margin: 7px 9px 8px 9px;
  overflow: hidden;
  background: #fefefd;
  box-shadow: 0 0 0 1px #dfe3d8;
  font-family: "Liberation Sans", sans-serif;
}
.shapes {
  position: absolute;
  inset: 0;
  width: 100%;
  height: 100%;
}
.label,
.chip,
.field,
.field-input {
  position: absolute;
  height: 14px;
  line-height: 14px;
  white-space: nowrap;
}
.label {
  font-size: 12px;
  font-weight: 700;
  color: #fff;
}
.chip {
  border-radius: 3px;
  background: #f5935f;
  font-size: 13px;
  text-align: center;
  color: #222;
}
.field {
  display: flex;
  border-radius: 3px;
}
.field select {
  width: 100%;
  height: 14px;
  padding: 0 0 0 5px;
  appearance: none;
  background: none;
  font-size: 13px;
  line-height: 14px;
  color: #1c1c1c;
}
.field::after {
  position: absolute;
  top: 6px;
  right: 7px;
  border: 3px solid transparent;
  border-top-color: #0006;
  border-bottom: 0;
  content: "";
}
.field-input {
  padding: 0 3px;
  border-radius: 3px;
  background: #ff9dae;
  font-size: 13px;
  color: #3a1018;
}
.gold {
  background: #dfd09c;
}
.purple {
  background: #d5b4ca;
}
.teal {
  background: #98d5c5;
}
.blue {
  background: #aec7ef;
}
.orange {
  background: #ffbc9c;
}
.green {
  background: #8cbcab;
}
.coral {
  background: #ffaa9c;
}
.warnings {
  position: absolute;
  left: 24px;
  bottom: 45px;
  font-family: "Open Sans", "Noto Sans", sans-serif;
}
.counters {
  display: flex;
  gap: 44px;
  padding: 0 0 3px 19px;
}
.counter {
  display: flex;
  flex-direction: column;
  gap: 6px;
  width: 42px;
}
.counter .plain {
  width: 28px;
}
.count {
  display: flex;
  align-items: center;
  gap: 4px;
  height: 22px;
  margin-left: -1px;
  font-size: 16px;
  line-height: 22px;
}
.show {
  display: block;
  width: 156px;
  height: 27px;
  border: 2px solid #777;
  background: #efefef;
  font-size: 17px;
  line-height: 20px;
  color: #222;
}
.pack {
  position: absolute;
  top: 16px;
  right: 28px;
}
.zoom {
  position: absolute;
  right: 44px;
  bottom: 149px;
  display: flex;
  flex-direction: column;
  gap: 2px;
}
.zoom .plain:first-child {
  margin-bottom: 12px;
}
.trash {
  position: absolute;
  right: 48px;
  bottom: 44px;
}
.ws-vbar,
.ws-hbar {
  position: absolute;
  border-radius: 6px;
  background: #cbcbcb;
}
.ws-vbar {
  top: 23%;
  right: 2px;
  width: 13px;
  height: 57%;
}
.ws-hbar {
  right: 281px;
  bottom: 5px;
  width: 55%;
  height: 12px;
}
.activate {
  position: absolute;
  right: 47px;
  bottom: 37px;
  font-family: "Open Sans", "Noto Sans", sans-serif;
  font-size: 16px;
  line-height: 24px;
  color: #b9b9b8;
}
.activate p {
  margin: 0;
}
.activate .big {
  font-size: 21px;
  line-height: 28px;
}
.page-bar {
  flex: none;
  width: 13px;
}
.page-bar .up {
  margin: 9px 0 47px;
  border-bottom-color: #505050;
}
.page-bar .thumb {
  width: 100%;
  height: 55%;
}
.page-bar .down {
  margin: auto 0 7px;
}

/* taskbar */
.taskbar {
  display: flex;
  flex: none;
  height: 46px;
  border-bottom: 2px solid #26282c;
  background: #d5d5d3;
}
.start {
  width: 55px;
}
.search {
  display: flex;
  align-items: center;
  gap: 12px;
  width: 386px;
  padding: 0 12px;
  background: #fff;
  font-size: 16px;
}
.search input {
  flex: 1;
  background: none;
}
.search input::placeholder {
  color: #444;
  opacity: 1;
}
.apps {
  display: flex;
  width: 498px;
}
.app {
  flex: 1;
}
.running {
  background: linear-gradient(#3f7d5c, #3f7d5c) center bottom / 44px 2px no-repeat;
}
.active {
  background: linear-gradient(#3f7d5c, #3f7d5c) center bottom / 100% 2px no-repeat #efefed;
}
.tray {
  display: flex;
  align-items: center;
  gap: 9px;
  margin-left: auto;
  padding-right: 21px;
  font-size: 13px;
  color: #222;
}
.more {
  padding-bottom: 28px;
  font-size: 16px;
  line-height: 16px;
  color: #5a5488;
}
.weather {
  margin-left: 24px;
}
.temp {
  margin-right: 11px;
  font-size: 15px;
}
.bluetooth {
  margin: 0 5px 0 4px;
}
.lang {
  margin: 0 4px 0 1px;
}
.clock {
  display: flex;
  flex-direction: column;
  align-items: center;
  margin-right: 9px;
  line-height: 20px;
}
</style>
